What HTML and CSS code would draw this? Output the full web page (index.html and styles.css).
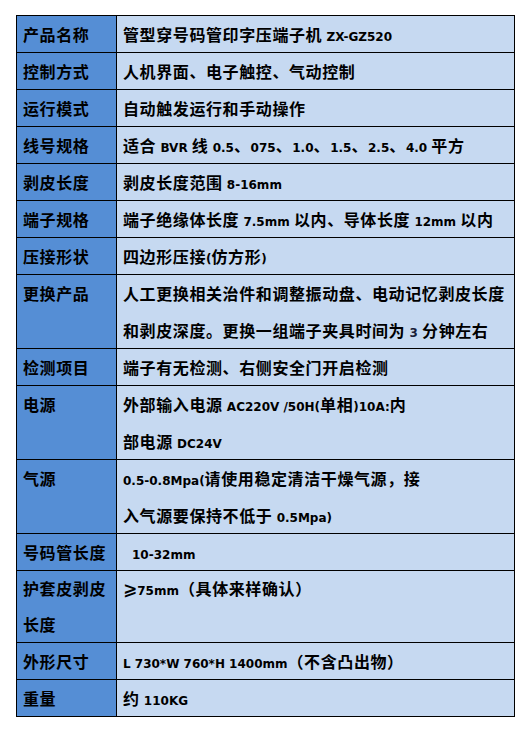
FILE: index.html
```html
<!DOCTYPE html>
<html lang="zh-CN">
<head>
<meta charset="utf-8">
<title>管型穿号码管印字压端子机</title>
<link rel="stylesheet" href="styles.css">
</head>
<body>
<div class="page">
<table class="spec">
  <colgroup><col class="c-label"><col class="c-value"></colgroup>
  <tbody>
    <tr class="single"><th>产品名称</th><td>管型穿号码管印字压端子机 <span class="en">ZX-GZ520</span></td></tr>
    <tr class="single"><th>控制方式</th><td>人机界面、电子触控、气动控制</td></tr>
    <tr class="single"><th>运行模式</th><td>自动触发运行和手动操作</td></tr>
    <tr class="single"><th>线号规格</th><td>适合 <span class="en">BVR</span> 线 <span class="en">0.5</span>、<span class="en">075</span>、<span class="en">1.0</span>、<span class="en">1.5</span>、<span class="en">2.5</span>、<span class="en">4.0</span> 平方</td></tr>
    <tr class="single"><th>剥皮长度</th><td>剥皮长度范围 <span class="en">8-16mm</span></td></tr>
    <tr class="single"><th>端子规格</th><td>端子绝缘体长度 <span class="en">7.5mm</span> 以内、导体长度 <span class="en">12mm</span> 以内</td></tr>
    <tr class="single"><th>压接形状</th><td>四边形压接<span class="en">(</span>仿方形<span class="en">)</span></td></tr>
    <tr class="double"><th>更换产品</th><td>人工更换相关治件和调整振动盘、电动记忆剥皮长度<br>和剥皮深度。更换一组端子夹具时间为 <span class="en num">3</span> 分钟左右</td></tr>
    <tr class="single"><th>检测项目</th><td>端子有无检测、右侧安全门开启检测</td></tr>
    <tr class="double"><th>电源</th><td>外部输入电源 <span class="en">AC220V /50H(</span>单相<span class="en">)10A:</span>内<br>部电源 <span class="en">DC24V</span></td></tr>
    <tr class="double"><th>气源</th><td><span class="en">0.5-0.8Mpa(</span>请使用稳定清洁干燥气源，接<br>入气源要保持不低于 <span class="en">0.5Mpa)</span></td></tr>
    <tr class="single"><th>号码管长度</th><td class="indent"><span class="en">10-32mm</span></td></tr>
    <tr class="double short"><th>护套皮剥皮<br>长度</th><td><span class="geq">⩾</span><span class="en">75mm</span>（具体来样确认）</td></tr>
    <tr class="single"><th>外形尺寸</th><td><span class="en">L 730*W 760*H 1400mm</span>（不含凸出物）</td></tr>
    <tr class="single"><th>重量</th><td>约 <span class="en">110KG</span></td></tr>
  </tbody>
</table>
</div>
</body>
</html>
```

FILE: styles.css
```css
html, body {
  margin: 0;
  padding: 0;
  background: #ffffff;
}

.page {
  padding: 15px 0 0 16px;
}

.spec {
  border-collapse: collapse;
  table-layout: fixed;
  width: 498px;
  font-family: "Noto Sans CJK SC", sans-serif;
  font-size: 16px;
  font-weight: bold;
  color: #000;
}

.c-label { width: 100px; }
.c-value { width: 398px; }

.spec th,
.spec td {
  border: 1px solid #000;
  padding: 0 0 0 6px;
  line-height: 36px;
  text-align: left;
  vertical-align: middle;
  white-space: nowrap;
  letter-spacing: 0.6px;
  font-weight: bold;
  overflow: hidden;
}

.spec th {
  background: #558ed5;
}

.spec td {
  background: #c6d9f1;
}

.spec tr.single { height: 37px; }
.spec tr.double { height: 74px; }
.spec tr.double.short { height: 72px; }

.spec .double th,
.spec .double td {
  line-height: 36.5px;
  vertical-align: top;
  padding-top: 0;
}

.spec .double.short th,
.spec .double.short td {
  line-height: 35.5px;
}

.spec td.indent {
  padding-left: 15px;
}

.en {
  font-family: "DejaVu Sans", sans-serif;
  font-size: 12px;
  font-weight: 700;
  letter-spacing: 0;
  line-height: 1;
  vertical-align: baseline;
}

.geq {
  font-family: "DejaVu Sans", sans-serif;
  font-size: 17px;
  line-height: 1;
  letter-spacing: 0;
}

.num {
  color: #1a1f3a;
}
```
